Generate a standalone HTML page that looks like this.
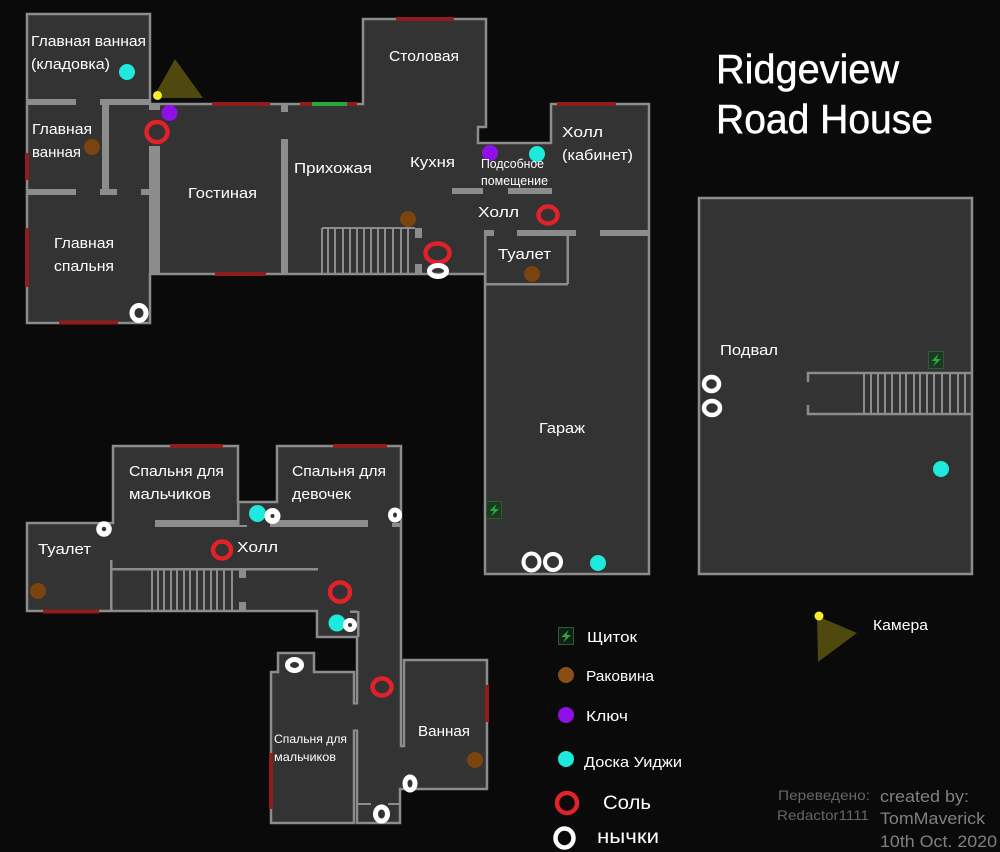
<!DOCTYPE html>
<html><head><meta charset="utf-8"><style>
html,body{margin:0;padding:0;background:#0a0a0a}
svg{display:block}
text{font-family:"Liberation Sans","DejaVu Sans",sans-serif;fill:#fff;font-size:15px}
</style></head><body>
<svg width="1000" height="852" viewBox="0 0 1000 852" xmlns="http://www.w3.org/2000/svg">
<rect width="1000" height="852" fill="#0a0a0a"/>
<g fill="#333" stroke="#8c8c8c" stroke-width="2.5">
<polygon points="27,14 150,14 150,104 363,104 363,19 486,19 486,127 478,127 478,143 551,143 551,104 649,104 649,574 485,574 485,274 150,274 150,323 27,323"/>
<rect x="699" y="198" width="273" height="376"/>
<polygon points="27,523 113,523 113,446 238,446 238,502 277,502 277,446 401,446 401,746 404,746 404,660 487,660 487,789 400,789 400,823 357,823 357,637 317,637 317,611 27,611"/>
<polygon points="271,672 278,672 278,653 314,653 314,672 354,672 354,823 271,823"/>
</g>
<g fill="#333">
<rect x="352.500" y="704.500" width="6" height="25"/>
<rect x="285" y="670" width="22" height="4"/>
<rect x="327" y="609" width="22" height="5"/>
<rect x="364" y="803" width="20" height="3"/>
</g>
<g fill="#8c8c8c">
<rect x="27" y="99" width="49" height="6"/><rect x="100" y="99" width="50" height="6"/>
<rect x="102" y="105" width="7" height="85"/>
<rect x="27" y="189" width="49" height="6"/><rect x="100" y="189" width="17" height="6"/><rect x="141" y="189" width="9" height="6"/>
<rect x="149" y="146" width="11" height="128"/><rect x="149" y="104" width="11" height="6"/>
<rect x="281" y="139" width="7" height="135"/><rect x="281" y="104" width="7" height="8"/>
<rect x="452" y="188" width="31" height="6"/><rect x="508" y="188" width="44" height="6"/>
<rect x="484" y="230" width="10" height="6"/><rect x="517" y="230" width="59" height="6"/><rect x="600" y="230" width="49" height="6"/>
<rect x="415" y="228" width="7" height="10"/><rect x="415" y="264" width="7" height="10"/>
<rect x="484" y="236" width="2.500" height="49"/>
<rect x="486" y="283" width="82" height="2.500"/><rect x="566.500" y="236" width="2.500" height="48"/>
<rect x="155" y="520" width="83" height="7"/><rect x="238" y="525" width="9" height="2"/><rect x="270" y="520" width="98" height="7"/>
<rect x="237" y="502" width="2.500" height="24"/>
<rect x="392" y="523" width="9" height="4"/>
<rect x="239" y="570" width="7" height="8"/><rect x="239" y="602" width="7" height="9"/>
<rect x="110" y="560" width="2.500" height="51"/><rect x="110" y="568" width="208" height="2.500"/>
<rect x="350" y="610.500" width="8" height="2.500"/><rect x="357" y="611" width="2.500" height="26"/>
<rect x="357" y="803" width="14" height="2"/><rect x="388" y="803" width="12" height="2"/>
<rect x="353" y="702.500" width="5" height="2"/><rect x="353" y="729.500" width="5" height="2"/>
</g>
<g fill="none" stroke="#8c8c8c" stroke-width="2">
<path d="M322 228H415M322 228V274M328 228V274M335 228V274M343 228V274M350 228V274M357 228V274M364 228V274M371 228V274M378 228V274M385 228V274M393 228V274M401 228V274M408 228V274"/>
<path d="M152 570V611M158 570V611M164 570V611M171 570V611M177 570V611M184 570V611M190 570V611M197 570V611M204 570V611M211 570V611M217 570V611M224 570V611M232 570V611"/>
<path d="M864 372V414M871 372V414M878 372V414M885 372V414M892 372V414M900 372V414M906 372V414M914 372V414M920 372V414M927 372V414M934 372V414M942 372V414M950 372V414M958 372V414M965 372V414"/>
<path d="M808 382V373H972M808 405V414H972" stroke-width="2.500"/>
</g>
<g fill="#8f1d1d">
<rect x="212" y="102" width="58" height="4"/><rect x="300" y="102" width="12" height="4"/><rect x="347" y="102" width="10" height="4"/>
<rect x="215" y="272" width="51" height="4"/><rect x="25" y="153" width="4" height="27"/><rect x="25" y="228" width="4" height="59"/>
<rect x="59" y="320.500" width="59" height="4"/><rect x="396" y="17" width="58" height="4"/><rect x="557" y="102" width="59" height="4"/>
<rect x="170" y="444" width="53" height="4"/><rect x="333" y="444" width="54" height="4"/><rect x="43" y="609.500" width="56" height="4"/>
<rect x="269" y="753" width="4" height="56"/><rect x="485" y="685" width="4" height="37"/>
</g>
<rect x="312" y="102" width="35" height="4" fill="#2aa43c"/>
<g fill="#50490f">
<polygon points="175,59 203,98 153,98"/>
<polygon points="817,616 857,633 818,662"/>
</g>
<g fill="#f5ec2a"><circle cx="157.500" cy="95.500" r="4.500"/><circle cx="819" cy="616" r="4.500"/></g>
<g fill="#7a4310">
<circle cx="92" cy="147" r="8"/><circle cx="408" cy="219" r="8"/><circle cx="532" cy="274" r="8"/>
<circle cx="38" cy="591" r="8"/><circle cx="475" cy="760" r="8"/><circle cx="566" cy="675" r="8" fill="#8a4d14"/>
</g>
<g fill="#8f10e8">
<circle cx="169.500" cy="113" r="8"/><circle cx="490" cy="153" r="8"/><circle cx="566" cy="715" r="8"/>
</g>
<g fill="#1de9dc">
<circle cx="127" cy="72" r="8"/><circle cx="537" cy="154" r="8"/><circle cx="598" cy="563" r="8"/><circle cx="941" cy="469" r="8"/>
<circle cx="257.500" cy="513.500" r="8.500"/><circle cx="337" cy="623" r="8.500"/><circle cx="566" cy="759" r="8"/>
</g>
<g fill="none" stroke="#e2212b" stroke-width="4.500">
<ellipse cx="157" cy="132" rx="10.500" ry="10"/><ellipse cx="437.500" cy="253" rx="12" ry="9.500"/><ellipse cx="548" cy="215" rx="9.500" ry="8.500"/>
<ellipse cx="222" cy="550" rx="9" ry="8.500"/><ellipse cx="340" cy="592" rx="10" ry="9.500"/><ellipse cx="382" cy="687" rx="9.500" ry="8.500"/>
<ellipse cx="567" cy="803" rx="10" ry="10"/>
</g>
<g fill="none" stroke="#fff">
<ellipse cx="139" cy="313" rx="7" ry="7.500" stroke-width="5"/>
<ellipse cx="438" cy="271" rx="8.500" ry="5.500" stroke-width="5"/>
<ellipse cx="531.500" cy="562" rx="8" ry="8.500" stroke-width="4"/>
<ellipse cx="553" cy="562" rx="8" ry="8" stroke-width="4"/>
<ellipse cx="711.500" cy="384" rx="7.500" ry="7" stroke-width="4.500"/>
<ellipse cx="712" cy="408" rx="8" ry="7" stroke-width="4.500"/>
<ellipse cx="104" cy="529" rx="5" ry="5" stroke-width="5.500"/>
<ellipse cx="272.500" cy="516" rx="5" ry="5" stroke-width="6"/>
<ellipse cx="395" cy="515" rx="4.500" ry="5" stroke-width="5"/>
<ellipse cx="350" cy="625" rx="4.500" ry="4.500" stroke-width="5"/>
<ellipse cx="294.500" cy="665" rx="7" ry="5.500" stroke-width="5"/>
<ellipse cx="410" cy="783.500" rx="5" ry="6.500" stroke-width="5"/>
<ellipse cx="381.500" cy="814" rx="6" ry="7" stroke-width="5"/>
<ellipse cx="564.500" cy="838" rx="9" ry="9.500" stroke-width="4.500"/>
</g>
<g>
<rect x="486.500" y="501.500" width="15" height="17" fill="#1c3a22" stroke="#2d5b35"/>
<path d="M496.500 504L489.500 511H494L491 516.500L499 509H494.500Z" fill="#2fa843"/>
<rect x="928.500" y="351.500" width="15" height="17" fill="#1c3a22" stroke="#2d5b35"/>
<path d="M938.500 354L931.500 361H936L933 366.500L941 359H936.500Z" fill="#2fa843"/>
<rect x="558.500" y="627.500" width="15" height="17" fill="#0f2113" stroke="#2d5b35"/>
<path d="M568.500 630L561.500 637H566L563 642.500L571 635H566.500Z" fill="#2fa843"/>
</g>
<text x="716" y="83" textLength="183" lengthAdjust="spacingAndGlyphs" style="font-size:41px;stroke:#fff;stroke-width:.5">Ridgeview</text>
<text x="716" y="133" textLength="217" lengthAdjust="spacingAndGlyphs" style="font-size:41px;stroke:#fff;stroke-width:.5">Road House</text>
<g>
<text x="31" y="46" textLength="115" lengthAdjust="spacingAndGlyphs">Главная ванная</text>
<text x="31" y="69" textLength="79" lengthAdjust="spacingAndGlyphs">(кладовка)</text>
<text x="32" y="134" textLength="60" lengthAdjust="spacingAndGlyphs">Главная</text>
<text x="32" y="157" textLength="49" lengthAdjust="spacingAndGlyphs">ванная</text>
<text x="54" y="248" textLength="60" lengthAdjust="spacingAndGlyphs">Главная</text>
<text x="54" y="271" textLength="60" lengthAdjust="spacingAndGlyphs">спальня</text>
<text x="188" y="198" textLength="69" lengthAdjust="spacingAndGlyphs">Гостиная</text>
<text x="294" y="173" textLength="78" lengthAdjust="spacingAndGlyphs">Прихожая</text>
<text x="410" y="167" textLength="45" lengthAdjust="spacingAndGlyphs">Кухня</text>
<text x="389" y="61" textLength="70" lengthAdjust="spacingAndGlyphs">Столовая</text>
<text x="481" y="168" textLength="63" lengthAdjust="spacingAndGlyphs" style="font-size:12.500px">Подсобное</text>
<text x="481" y="185" textLength="67" lengthAdjust="spacingAndGlyphs" style="font-size:12.500px">помещение</text>
<text x="562" y="137" textLength="41" lengthAdjust="spacingAndGlyphs">Холл</text>
<text x="562" y="160" textLength="71" lengthAdjust="spacingAndGlyphs">(кабинет)</text>
<text x="478" y="217" textLength="41" lengthAdjust="spacingAndGlyphs">Холл</text>
<text x="498" y="259" textLength="53" lengthAdjust="spacingAndGlyphs">Туалет</text>
<text x="539" y="433" textLength="46" lengthAdjust="spacingAndGlyphs">Гараж</text>
<text x="720" y="355" textLength="58" lengthAdjust="spacingAndGlyphs">Подвал</text>
<text x="129" y="476" textLength="95" lengthAdjust="spacingAndGlyphs">Спальня для</text>
<text x="129" y="499" textLength="82" lengthAdjust="spacingAndGlyphs">мальчиков</text>
<text x="292" y="476" textLength="94" lengthAdjust="spacingAndGlyphs">Спальня для</text>
<text x="292" y="499" textLength="59" lengthAdjust="spacingAndGlyphs">девочек</text>
<text x="38" y="554" textLength="53" lengthAdjust="spacingAndGlyphs">Туалет</text>
<text x="237" y="552" textLength="41" lengthAdjust="spacingAndGlyphs">Холл</text>
<text x="418" y="736" textLength="52" lengthAdjust="spacingAndGlyphs">Ванная</text>
<text x="274" y="743" textLength="73" lengthAdjust="spacingAndGlyphs" style="font-size:12px">Спальня для</text>
<text x="274" y="761" textLength="62" lengthAdjust="spacingAndGlyphs" style="font-size:12px">мальчиков</text>
<text x="587" y="642" textLength="50" lengthAdjust="spacingAndGlyphs">Щиток</text>
<text x="586" y="681" textLength="68" lengthAdjust="spacingAndGlyphs">Раковина</text>
<text x="586" y="721" textLength="42" lengthAdjust="spacingAndGlyphs">Ключ</text>
<text x="584" y="767" textLength="98" lengthAdjust="spacingAndGlyphs">Доска Уиджи</text>
<text x="603" y="809" textLength="48" lengthAdjust="spacingAndGlyphs" style="font-size:19px">Соль</text>
<text x="597" y="843" textLength="62" lengthAdjust="spacingAndGlyphs" style="font-size:19px">нычки</text>
<text x="873" y="630" textLength="55" lengthAdjust="spacingAndGlyphs">Камера</text>
</g>
<text x="778" y="800" textLength="92" lengthAdjust="spacingAndGlyphs" style="font-size:14px;fill:#666">Переведено:</text>
<text x="777" y="820" textLength="92" lengthAdjust="spacingAndGlyphs" style="font-size:14px;fill:#666">Redactor1111</text>
<text x="880" y="802" textLength="89" lengthAdjust="spacingAndGlyphs" style="font-size:17px;fill:#808080">created by:</text>
<text x="880" y="824" textLength="105" lengthAdjust="spacingAndGlyphs" style="font-size:17px;fill:#808080">TomMaverick</text>
<text x="880" y="847" textLength="117" lengthAdjust="spacingAndGlyphs" style="font-size:17px;fill:#808080">10th Oct. 2020</text>
</svg>
</body></html>
